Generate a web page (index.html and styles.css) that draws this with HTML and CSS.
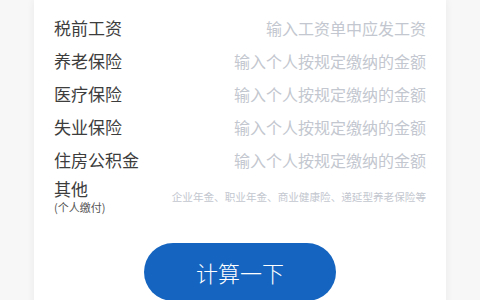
FILE: index.html
```html
<!DOCTYPE html>
<html lang="zh-CN">
<head>
<meta charset="utf-8">
<title>个税计算</title>
<link rel="stylesheet" href="styles.css">
</head>
<body>
<div class="page">
  <div class="card">
    <div class="row">
      <span class="label">税前工资</span>
      <input class="field" type="text" placeholder="输入工资单中应发工资">
    </div>
    <div class="row">
      <span class="label">养老保险</span>
      <input class="field" type="text" placeholder="输入个人按规定缴纳的金额">
    </div>
    <div class="row">
      <span class="label">医疗保险</span>
      <input class="field" type="text" placeholder="输入个人按规定缴纳的金额">
    </div>
    <div class="row">
      <span class="label">失业保险</span>
      <input class="field" type="text" placeholder="输入个人按规定缴纳的金额">
    </div>
    <div class="row">
      <span class="label">住房公积金</span>
      <input class="field" type="text" placeholder="输入个人按规定缴纳的金额">
    </div>
    <div class="row row-other">
      <div class="label-block">
        <span class="label">其他</span>
        <span class="sub">(个人缴付)</span>
      </div>
      <input class="field field-small" type="text" placeholder="企业年金、职业年金、商业健康险、递延型养老保险等">
    </div>
    <div class="actions">
      <button class="btn" type="button">计算一下</button>
    </div>
  </div>
</div>
</body>
</html>
```

FILE: styles.css
```css
html, body {
  margin: 0;
  padding: 0;
  background: #f7f7f8;
  font-family: "Noto Sans CJK SC", "Noto Sans", sans-serif;
  overflow: hidden;
}

.page {
  padding: 0 34px;
}

.card {
  background: #ffffff;
  box-shadow: 0 0 8px rgba(0, 0, 0, 0.06);
  padding: 11px 20px 40px;
  min-height: 320px;
  box-sizing: border-box;
}

.row {
  display: flex;
  align-items: center;
  justify-content: space-between;
  height: 33px;
}

.label {
  font-size: 17px;
  line-height: 20px;
  color: #3d3d3d;
  white-space: nowrap;
}

.field {
  flex: 1;
  min-width: 0;
  border: none;
  outline: none;
  background: transparent;
  text-align: right;
  font-family: inherit;
  font-size: 16px;
  color: #333333;
  padding: 0;
  margin: 0;
}

.field::placeholder {
  color: #c3c7cf;
}

.row-other {
  height: auto;
  padding-top: 3px;
}

.label-block {
  display: flex;
  flex-direction: column;
}

.sub {
  font-size: 11px;
  line-height: 14px;
  margin-top: 1px;
  color: #555555;
}

.field-small {
  font-size: 10.6px;
}

.actions {
  display: flex;
  justify-content: center;
  margin-top: 29px;
}

.btn {
  width: 192px;
  height: 58px;
  border: none;
  border-radius: 29px;
  background: #1565c0;
  color: #ffffff;
  font-family: inherit;
  font-size: 22px;
  font-weight: 300;
  padding: 0;
  cursor: pointer;
}
```
